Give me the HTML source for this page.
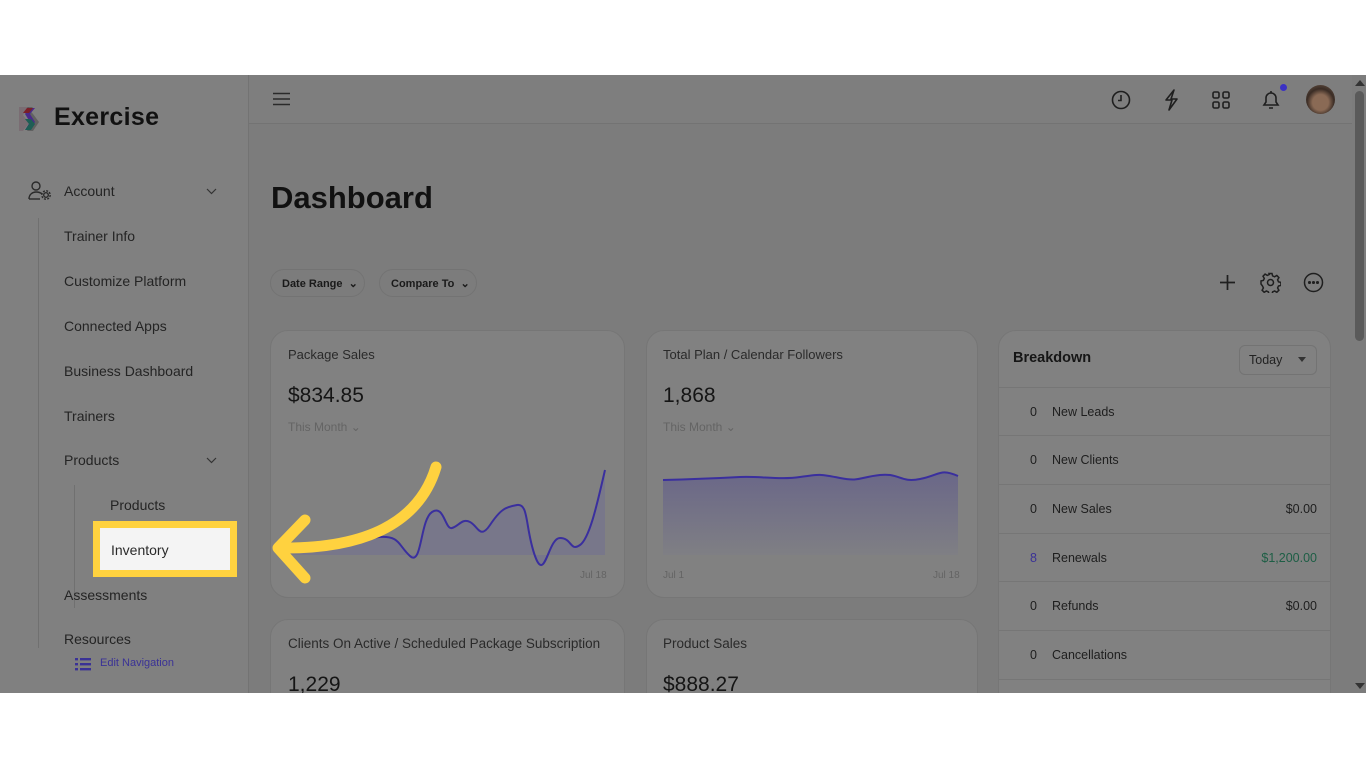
<!DOCTYPE html>
<html><head><meta charset="utf-8"><style>
*{box-sizing:border-box;margin:0;padding:0}
body{width:1366px;height:768px;background:#fff;font-family:"Liberation Sans",sans-serif;position:relative;overflow:hidden;color:#1c1c1c}
.abs{position:absolute}
#app{position:absolute;left:0;top:75px;width:1366px;height:618px;background:#7c7c7c;overflow:hidden}
#side{position:absolute;left:0;top:0;width:249px;height:618px;background:#808080;border-right:1px solid #737373}
.nav{position:absolute;font-size:14px;color:#242424}
.card{position:absolute;background:#818181;border:1px solid #767676;border-radius:18px}
.t{position:absolute;font-size:14px;color:#2a2a2a}
.row{position:absolute;left:0;width:332px;height:49px;border-top:1px solid #767676;font-size:12.5px;color:#1e1e1e}
.row span{position:absolute;top:17px}
</style></head><body>
<div id="app">
 <div id="side">
  <svg class="abs" style="left:17px;top:30px" width="28" height="28" viewBox="0 0 28 28"><path d="M2 2h10l-6 8 6 8-6 8H2z" fill="#7a6d73"/><path d="M10 2h6l-6 7 6 8-6 9h6l6-9-6-8z" fill="#333" opacity=".4"/><path d="M12 3l6 0-5 6 5 8-5 8h-5l5-8-5-8z" fill="#4a2a8a"/><path d="M8 14l6 0 4 5-4 6h-6l4-6z" fill="#1f5e55"/><path d="M10 3h6l-4 5h-6z" fill="#7a1f28"/></svg>
  <div class="abs" style="left:54px;top:28px;font-size:25px;color:#111;font-weight:bold;letter-spacing:0.3px">Exercise</div>
  <svg class="abs" style="left:28px;top:106px" width="24" height="20" viewBox="0 0 24 20" fill="none" stroke="#2a2a2a" stroke-width="1.4"><circle cx="8" cy="5" r="4"/><path d="M1 18c0-5 4-7 7-7s5 1 6 2"/><path d="M1 18h11"/><circle cx="18" cy="14" r="2.3"/><circle cx="18" cy="14" r="4.2" stroke-dasharray="2 1.3"/></svg>
  <div class="nav" style="left:64px;top:108px">Account</div>
  <svg class="abs" style="left:206px;top:113px" width="11" height="7"><path d="M1 1l4.5 4.5L10 1" fill="none" stroke="#333" stroke-width="1.2"/></svg>
  <div class="abs" style="left:38px;top:143px;width:1px;height:430px;background:#707070"></div>
  <div class="nav" style="left:64px;top:153px">Trainer Info</div>
  <div class="nav" style="left:64px;top:198px">Customize Platform</div>
  <div class="nav" style="left:64px;top:243px">Connected Apps</div>
  <div class="nav" style="left:64px;top:288px">Business Dashboard</div>
  <div class="nav" style="left:64px;top:333px">Trainers</div>
  <div class="nav" style="left:64px;top:377px">Products</div>
  <svg class="abs" style="left:206px;top:382px" width="11" height="7"><path d="M1 1l4.5 4.5L10 1" fill="none" stroke="#333" stroke-width="1.2"/></svg>
  <div class="abs" style="left:74px;top:410px;width:1px;height:123px;background:#707070"></div>
  <div class="nav" style="left:110px;top:422px">Products</div>
  <div class="nav" style="left:64px;top:512px">Assessments</div>
  <div class="nav" style="left:64px;top:556px">Resources</div>
  <svg class="abs" style="left:75px;top:583px" width="16" height="13" fill="#3a3296"><rect x="0" y="0" width="3" height="2.4"/><rect x="5" y="0" width="11" height="2.4"/><rect x="0" y="5" width="3" height="2.4"/><rect x="5" y="5" width="11" height="2.4"/><rect x="0" y="10" width="3" height="2.4"/><rect x="5" y="10" width="11" height="2.4"/></svg>
  <div class="abs" style="left:100px;top:582px;font-size:11px;color:#3a3296">Edit Navigation</div>
 </div>
 <div class="abs" style="left:249px;top:0;width:1103px;height:49px;border-bottom:1px solid #737373;background:#7e7e7e"></div>
 <svg class="abs" style="left:273px;top:17px" width="17" height="14"><path d="M0 1.5h17M0 7h17M0 12.5h17" stroke="#2a2a2a" stroke-width="1.6"/></svg>
 <svg class="abs" style="left:1111px;top:15px" width="20" height="20" fill="none" stroke="#1f1f1f" stroke-width="1.6"><circle cx="10" cy="10" r="8.5"/><path d="M10 5v5.5H7"/></svg>
 <svg class="abs" style="left:1163px;top:14px" width="16" height="22" fill="none" stroke="#1f1f1f" stroke-width="1.6" stroke-linejoin="round"><path d="M11 1L3 11h6l-3 10 8-11H8z"/></svg>
 <svg class="abs" style="left:1212px;top:16px" width="18" height="18" fill="none" stroke="#1f1f1f" stroke-width="1.6"><rect x="1" y="1" width="6" height="6" rx="1.5"/><rect x="11" y="1" width="6" height="6" rx="1.5"/><rect x="1" y="11" width="6" height="6" rx="1.5"/><rect x="11" y="11" width="6" height="6" rx="1.5"/></svg>
 <svg class="abs" style="left:1261px;top:14px" width="20" height="22" fill="none" stroke="#1f1f1f" stroke-width="1.6"><path d="M3 16h14l-2-3V9a5 5 0 0 0-10 0v4z"/><path d="M8 19h4M10 2v2"/></svg>
 <div class="abs" style="left:1280px;top:9px;width:7px;height:7px;border-radius:50%;background:#3b31c4"></div>
 <div class="abs" style="left:1306px;top:10px;width:29px;height:29px;border-radius:50%;background:radial-gradient(circle at 50% 60%,#8a6a55 0 35%,#3a2c25 60%,#6f5a4a 100%)"></div>
 <svg class="abs" style="left:1354px;top:4px" width="12" height="8"><path d="M1 7L6 1 11 7z" fill="#333"/></svg>
 <svg class="abs" style="left:1354px;top:607px" width="12" height="8"><path d="M1 1L6 7 11 1z" fill="#333"/></svg>
 <div class="abs" style="left:1355px;top:16px;width:9px;height:250px;border-radius:5px;background:#5a5a5a"></div>
 <div class="abs" style="left:271px;top:105px;font-size:31px;color:#111;font-weight:bold">Dashboard</div>
 <div class="abs" style="left:270px;top:194px;width:95px;height:28px;border:1px solid #737373;border-radius:14px;font-size:11px;padding:7px 0 0 11px;color:#1a1a1a;font-weight:bold">Date Range &nbsp;⌄</div>
 <div class="abs" style="left:379px;top:194px;width:98px;height:28px;border:1px solid #737373;border-radius:14px;font-size:11px;padding:7px 0 0 11px;color:#1a1a1a;font-weight:bold">Compare To &nbsp;⌄</div>
 <svg class="abs" style="left:1219px;top:199px" width="17" height="17"><path d="M8.5 1v15M1 8.5h15" stroke="#1f1f1f" stroke-width="1.7"/></svg>
 <svg class="abs" style="left:1260px;top:197px" width="21" height="21" fill="none" stroke="#1f1f1f" stroke-width="1.5"><circle cx="10.5" cy="10.5" r="3"/><path d="M9 1.5h3l.6 2.4 2 .9 2.2-1.3 2.1 2.1-1.3 2.2.9 2 2.4.6v3l-2.4.6-.9 2 1.3 2.2-2.1 2.1-2.2-1.3-2 .9-.6 2.4H9l-.6-2.4-2-.9-2.2 1.3-2.1-2.1 1.3-2.2-.9-2L1 12v-3l2.4-.6.9-2L3 4.2l2.1-2.1 2.2 1.3 2-.9z"/></svg>
 <svg class="abs" style="left:1303px;top:197px" width="21" height="21" fill="none" stroke="#1f1f1f" stroke-width="1.5"><circle cx="10.5" cy="10.5" r="9"/><circle cx="6.5" cy="10.5" r=".8" fill="#1f1f1f"/><circle cx="10.5" cy="10.5" r=".8" fill="#1f1f1f"/><circle cx="14.5" cy="10.5" r=".8" fill="#1f1f1f"/></svg>

 <div class="card" style="left:270px;top:255px;width:355px;height:268px"></div>
 <div class="t" style="left:288px;top:272px;font-size:13px">Package Sales</div>
 <div class="t" style="left:288px;top:309px;font-size:21px;color:#151515">$834.85</div>
 <div class="t" style="left:288px;top:345px;font-size:12px;color:#646464">This Month ⌄</div>
 <div class="t" style="left:580px;top:495px;font-size:10px;color:#646464">Jul 18</div>
 <div class="card" style="left:646px;top:255px;width:332px;height:268px"></div>
 <div class="t" style="left:663px;top:272px;font-size:13px">Total Plan / Calendar Followers</div>
 <div class="t" style="left:663px;top:309px;font-size:21px;color:#151515">1,868</div>
 <div class="t" style="left:663px;top:345px;font-size:12px;color:#646464">This Month ⌄</div>
 <div class="t" style="left:663px;top:495px;font-size:10px;color:#646464">Jul 1</div>
 <div class="t" style="left:933px;top:495px;font-size:10px;color:#646464">Jul 18</div>
 <svg class="abs" style="left:0;top:-75px" width="1366" height="768">
  <defs><linearGradient id="g" x1="0" y1="0" x2="0" y2="1"><stop offset="0" stop-color="#6a6788"/><stop offset="1" stop-color="#7f7f84"/></linearGradient></defs>
  <path d="M663 480C700 479 720 478 740 477S780 480 800 477 820 474 840 478 860 477 880 475 900 483 920 479 940 468 958 476V555H663Z" fill="url(#g)"/>
  <path d="M663 480C700 479 720 478 740 477S780 480 800 477 820 474 840 478 860 477 880 475 900 483 920 479 940 468 958 476" fill="none" stroke="#3a2f9e" stroke-width="2"/>
  <path d="M288 545C320 545 360 538 380 537S398 545 410 556 420 520 432 512 445 530 452 528 462 518 470 522 480 540 490 525 505 507 517 505 525 528 535 556 548 538 560 538 570 552 580 545 598 500 605 470V555H288Z" fill="#78778a"/>
  <path d="M288 545C320 545 360 538 380 537S398 545 410 556 420 520 432 512 445 530 452 528 462 518 470 522 480 540 490 525 505 507 517 505 525 528 535 556 548 538 560 538 570 552 580 545 598 500 605 470" fill="none" stroke="#3a2f9e" stroke-width="2"/>
 </svg>

 <div class="card" style="left:270px;top:544px;width:355px;height:100px"></div>
 <div class="t" style="left:288px;top:561px;font-size:13.5px">Clients On Active / Scheduled Package Subscription</div>
 <div class="t" style="left:288px;top:598px;font-size:21px;color:#151515">1,229</div>
 <div class="card" style="left:646px;top:544px;width:332px;height:100px"></div>
 <div class="t" style="left:663px;top:561px;font-size:13.5px">Product Sales</div>
 <div class="t" style="left:663px;top:598px;font-size:21px;color:#151515">$888.27</div>

 <div class="card" style="left:998px;top:255px;width:333px;height:420px;border-radius:18px 18px 0 0;overflow:hidden">
  <div class="t" style="left:14px;top:19px;font-size:14.5px;color:#161616;font-weight:bold">Breakdown</div>
  <div class="abs" style="left:240px;top:14px;width:78px;height:30px;border:1px solid #737373;border-radius:6px;font-size:12.5px;padding:7px 0 0 9px;color:#222">Today <span style="position:absolute;left:58px;top:11px;border:4px solid transparent;border-top:5px solid #333"></span></div>
  <div class="row" style="top:56px"><span style="left:31px">0</span><span style="left:53px">New Leads</span></div>
  <div class="row" style="top:104px"><span style="left:31px">0</span><span style="left:53px">New Clients</span></div>
  <div class="row" style="top:153px"><span style="left:31px">0</span><span style="left:53px">New Sales</span><span style="right:14px">$0.00</span></div>
  <div class="row" style="top:202px"><span style="left:31px;color:#3a3296">8</span><span style="left:53px">Renewals</span><span style="right:14px;color:#1d5e45">$1,200.00</span></div>
  <div class="row" style="top:250px"><span style="left:31px">0</span><span style="left:53px">Refunds</span><span style="right:14px">$0.00</span></div>
  <div class="row" style="top:299px"><span style="left:31px">0</span><span style="left:53px">Cancellations</span></div>
  <div class="row" style="top:348px"></div>
 </div>
</div>
<div class="abs" style="left:93px;top:521px;width:144px;height:56px;background:#ffd23f"></div>
<div class="abs" style="left:100px;top:528px;width:130px;height:42px;background:#f4f4f4;font-size:14px;color:#2a2a2a;padding:14px 0 0 11px">Inventory</div>
<svg class="abs" style="left:0;top:0" width="1366" height="768" fill="none" stroke="#ffd23f" stroke-width="11" stroke-linecap="round" stroke-linejoin="round">
 <path d="M436 467C420 520 370 548 285 548"/>
 <path d="M305 520L278 548 305 578"/>
</svg>
</body></html>
